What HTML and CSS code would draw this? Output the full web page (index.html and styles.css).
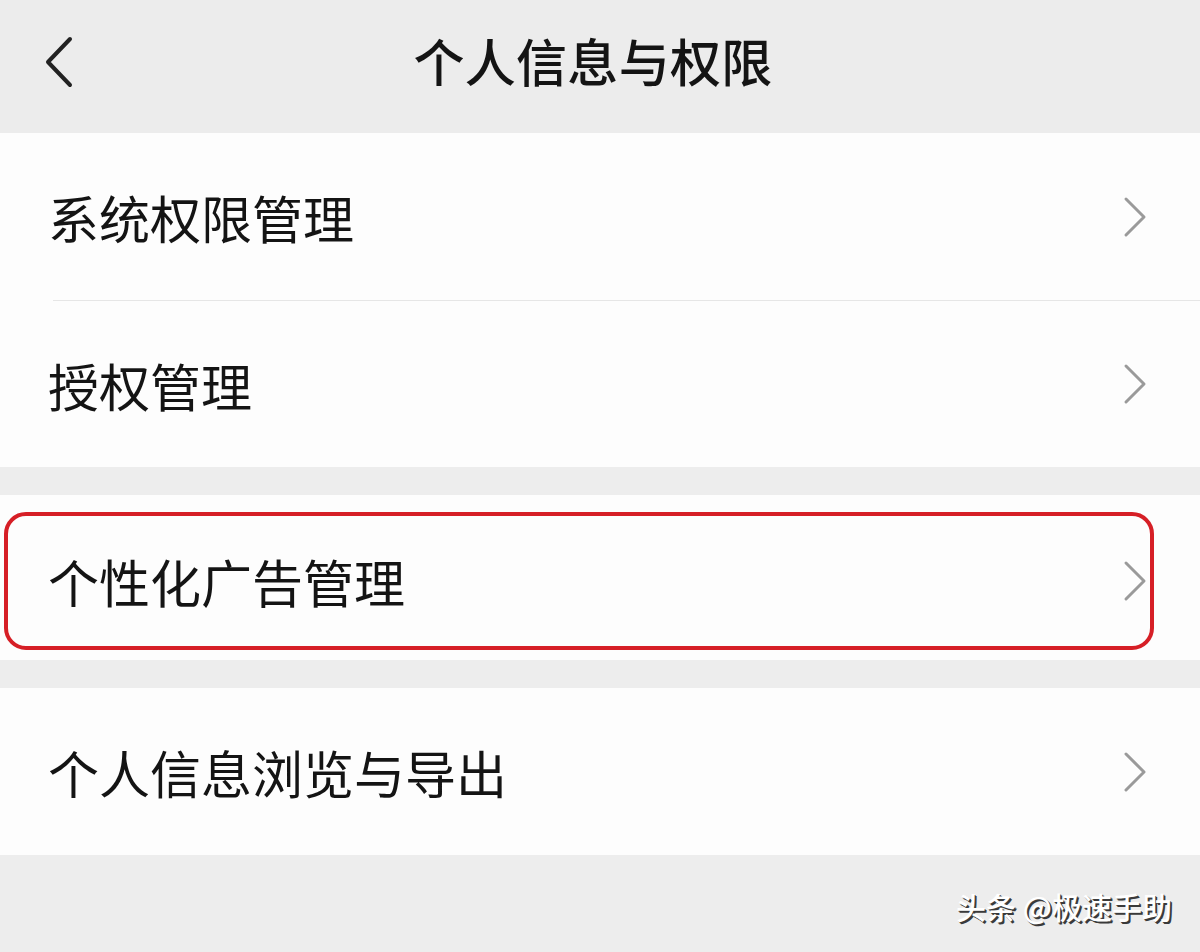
FILE: index.html
```html
<!DOCTYPE html>
<html lang="zh-CN">
<head>
<meta charset="utf-8">
<title>个人信息与权限</title>
<link rel="stylesheet" href="styles.css">
</head>
<body>
<header class="topbar">
  <div class="back">
    <svg width="32" height="54" viewBox="0 0 32 54"><path d="M27 4 L5 27 L27 50" fill="none" stroke="#222" stroke-width="4" stroke-linecap="round" stroke-linejoin="round"/></svg>
  </div>
  <h1 class="title">个人信息与权限</h1>
  <div></div>
</header>

<section class="group">
  <div class="row">
    <span class="label">系统权限管理</span>
    <svg class="chev" width="24" height="42" viewBox="0 0 24 42"><path d="M3 3 L21 21 L3 39" fill="none" stroke="#9a9a9a" stroke-width="3" stroke-linecap="round" stroke-linejoin="round"/></svg>
  </div>
  <div class="divider"></div>
  <div class="row">
    <span class="label">授权管理</span>
    <svg class="chev" width="24" height="42" viewBox="0 0 24 42"><path d="M3 3 L21 21 L3 39" fill="none" stroke="#9a9a9a" stroke-width="3" stroke-linecap="round" stroke-linejoin="round"/></svg>
  </div>
</section>

<section class="group group-hl">
  <div class="highlight">
    <span class="label">个性化广告管理</span>
    <svg class="chev" width="24" height="42" viewBox="0 0 24 42"><path d="M3 3 L21 21 L3 39" fill="none" stroke="#9a9a9a" stroke-width="3" stroke-linecap="round" stroke-linejoin="round"/></svg>
  </div>
</section>

<section class="group">
  <div class="row">
    <span class="label">个人信息浏览与导出</span>
    <svg class="chev" width="24" height="42" viewBox="0 0 24 42"><path d="M3 3 L21 21 L3 39" fill="none" stroke="#9a9a9a" stroke-width="3" stroke-linecap="round" stroke-linejoin="round"/></svg>
  </div>
</section>

<footer class="mark">头条 @极速手助</footer>
</body>
</html>
```
FILE: styles.css
```css
html, body {
  margin: 0;
  padding: 0;
}
body {
  width: 1200px;
  height: 952px;
  overflow: hidden;
  background: #ededed;
  font-family: "Noto Sans CJK SC", "Noto Sans", sans-serif;
  color: #141414;
}
.topbar {
  height: 133px;
  display: grid;
  grid-template-columns: 1fr auto 1fr;
  align-items: center;
  padding-right: 14px;
  background: #ececec;
}
.back {
  padding-left: 43px;
  display: flex;
  align-items: center;
  padding-bottom: 10px;
}
.title {
  margin: 0;
  font-size: 51px;
  font-weight: 500;
  letter-spacing: 0.3px;
  line-height: 1;
  padding-bottom: 12px;
}
.group {
  background: #fdfdfd;
  margin-bottom: 28px;
}
.row {
  height: 167px;
  display: flex;
  align-items: center;
  justify-content: space-between;
  padding: 0 53px 0 48px;
}
.row .label {
  padding-top: 2px;
}
.label {
  font-size: 51px;
  line-height: 1;
  color: #141414;
}
.divider {
  height: 1px;
  margin-left: 53px;
  background: #e6e6e6;
}
.group .row + .divider + .row {
  height: 166px;
}
.group-hl {
  padding: 17px 46px 10px 4px;
}
.highlight {
  height: 130px;
  border: 4px solid #d61f26;
  border-radius: 22px;
  display: flex;
  align-items: center;
  justify-content: space-between;
  padding: 0 3px 0 40px;
}
.mark {
  text-align: right;
  padding: 33px 28px 0 0;
  margin-top: -28px;
  font-size: 30px;
  font-weight: 500;
  line-height: 1.2;
  color: #ffffff;
  text-shadow: 2px 2px 0 #3a3a3a, 1px 1px 0 #555;
}
```
